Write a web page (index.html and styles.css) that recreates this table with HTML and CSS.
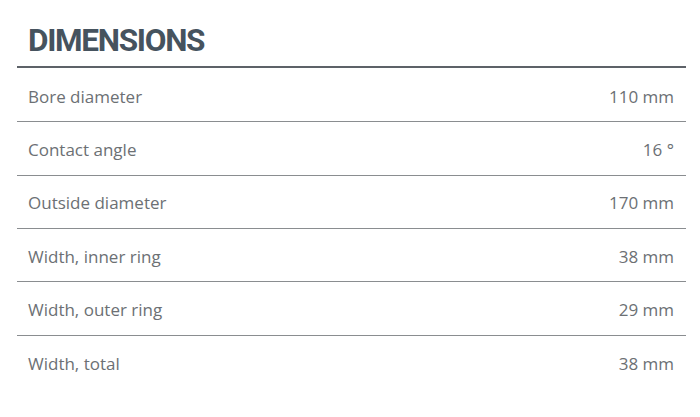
FILE: index.html
```html
<!DOCTYPE html>
<html lang="en">
<head>
<meta charset="utf-8">
<title>Dimensions</title>
<link rel="stylesheet" href="styles.css">
</head>
<body>
<section class="spec">
  <h2 class="spec-title">DIMENSIONS</h2>
  <div class="spec-list">
    <div class="spec-row"><span class="spec-name">Bore diameter</span><span class="spec-value">110 mm</span></div>
    <div class="spec-row"><span class="spec-name">Contact angle</span><span class="spec-value">16 °</span></div>
    <div class="spec-row"><span class="spec-name">Outside diameter</span><span class="spec-value">170 mm</span></div>
    <div class="spec-row"><span class="spec-name">Width, inner ring</span><span class="spec-value">38 mm</span></div>
    <div class="spec-row"><span class="spec-name">Width, outer ring</span><span class="spec-value">29 mm</span></div>
    <div class="spec-row"><span class="spec-name">Width, total</span><span class="spec-value">38 mm</span></div>
  </div>
</section>
</body>
</html>
```
FILE: styles.css
```css
html, body {
  margin: 0;
  padding: 0;
  background: #ffffff;
}
body {
  font-family: "Open Sans", "Noto Sans", sans-serif;
}
.spec {
  width: 669px;
  margin-left: 17px;
  padding-top: 20px;
}
.spec-title {
  margin: 0;
  padding: 0 0 4px 11px;
  font-family: Roboto, "Open Sans", sans-serif;
  font-size: 31.5px;
  line-height: 42px;
  font-weight: 700;
  color: #46535e;
  letter-spacing: -1.3px;
  border-bottom: 2px solid #5d6268;
}
.spec-list {
  display: flex;
  flex-direction: column;
  padding-top: 1px;
}
.spec-row {
  box-sizing: border-box;
  height: 53.33px;
  display: flex;
  align-items: center;
  justify-content: space-between;
  padding: 2px 12px 0 11px;
  border-bottom: 1px solid #8a8d90;
  font-size: 17px;
  color: #6c7074;
}
.spec-row:last-child {
  border-bottom: none;
}
```
